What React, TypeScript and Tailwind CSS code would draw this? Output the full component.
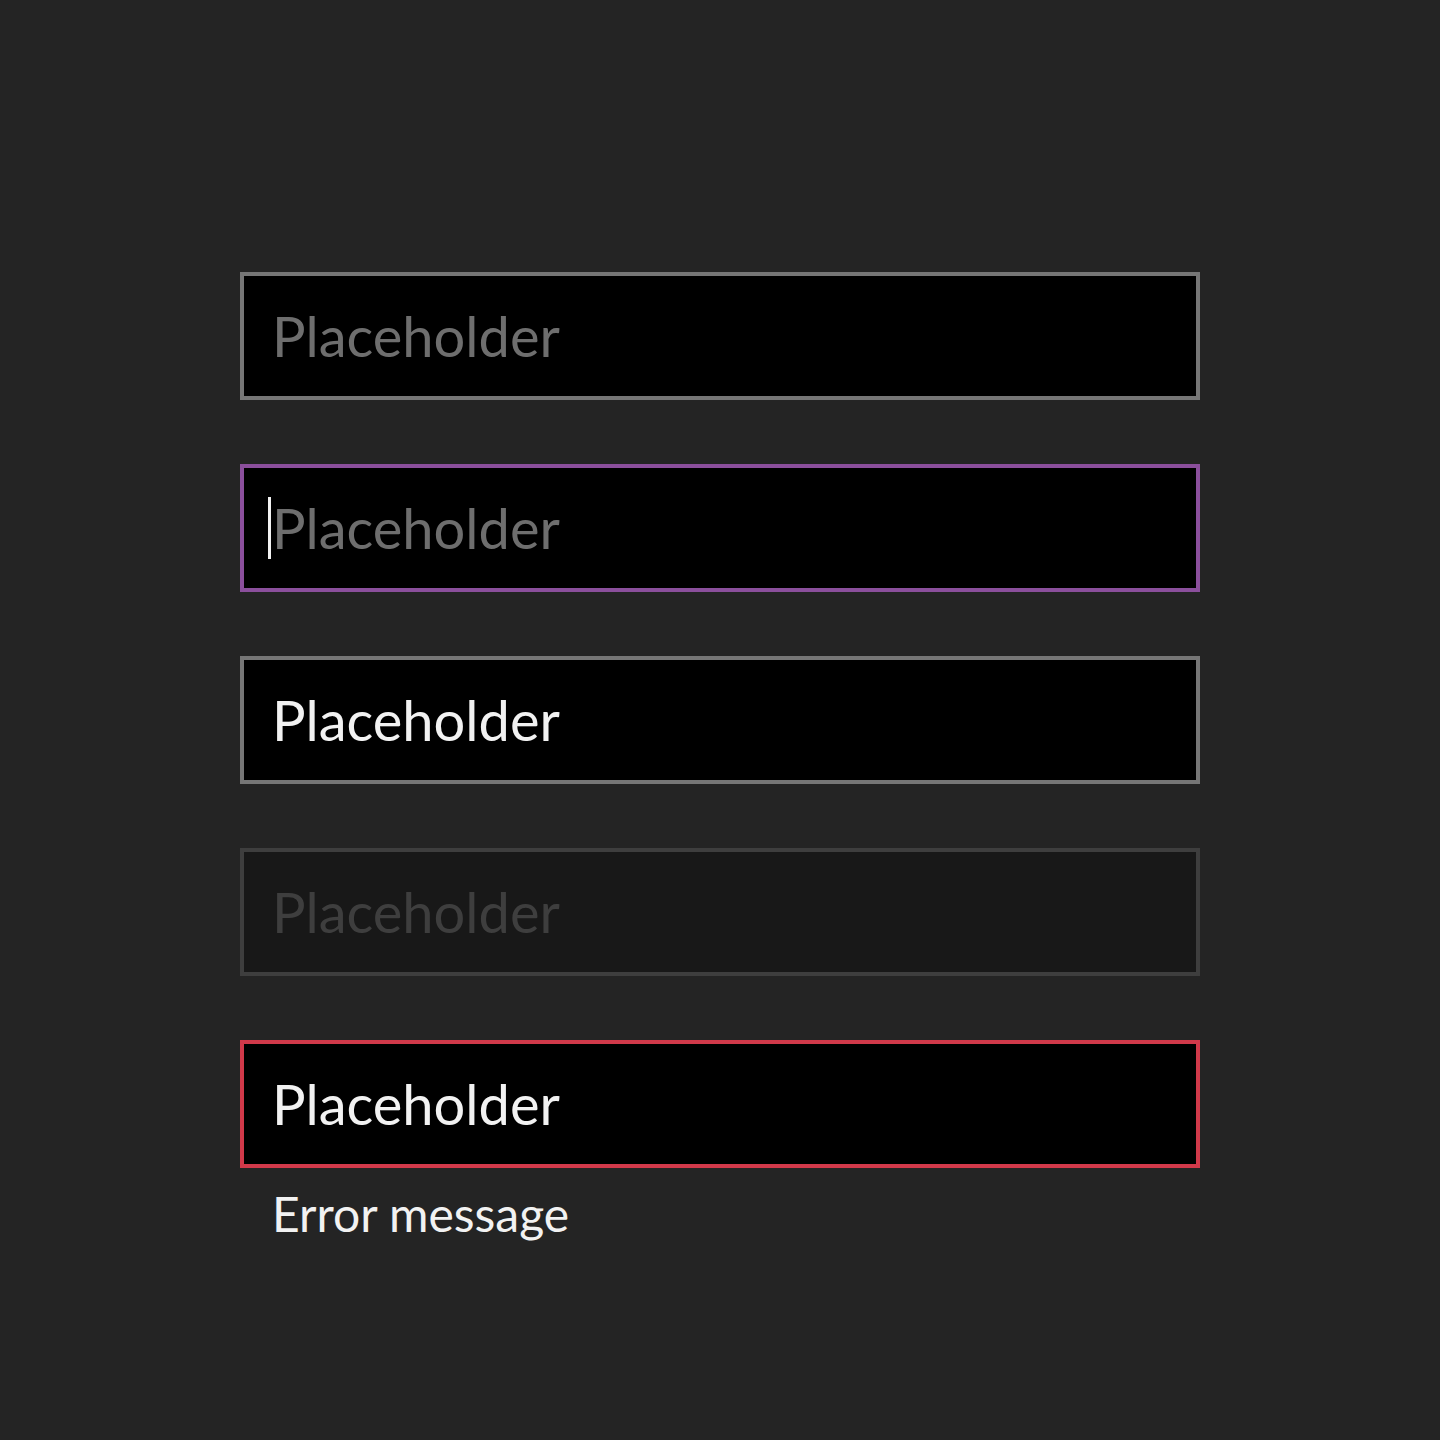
export default function App() {
  const font = { fontFamily: "Lato, 'Noto Sans', sans-serif" };
  return (
    <div className="min-h-[1440px] w-full bg-[#242424] pt-[272px] pl-[240px]" style={font}>
      <div className="flex w-[960px] flex-col gap-16">
        {/* Default */}
        <div className="flex h-32 items-center border-4 border-[#767676] bg-black pl-7">
          <span className="text-[56px] leading-none text-[#6e6e6e]">Placeholder</span>
        </div>

        {/* Focused */}
        <div className="flex h-32 items-center border-4 border-[#8b4f9c] bg-black pl-6">
          <span className="mr-[1px] h-[62px] w-[3px] bg-[#f2f2f2]" />
          <span className="text-[56px] leading-none text-[#6e6e6e]">Placeholder</span>
        </div>

        {/* Filled */}
        <div className="flex h-32 items-center border-4 border-[#767676] bg-black pl-7">
          <span className="text-[56px] leading-none text-[#f2f2f2]">Placeholder</span>
        </div>

        {/* Disabled */}
        <div className="flex h-32 items-center border-4 border-[#3e3e3e] bg-[#181818] pl-7">
          <span className="text-[56px] leading-none text-[#3e3e3e]">Placeholder</span>
        </div>

        {/* Error */}
        <div className="flex flex-col">
          <div className="flex h-32 items-center border-4 border-[#d1394a] bg-black pl-7">
            <span className="text-[56px] leading-none text-[#f2f2f2]">Placeholder</span>
          </div>
          <p className="mt-4 pl-[32px] text-[48px] leading-[60px] text-[#f2f2f2]">Error message</p>
        </div>
      </div>
    </div>
  );
}
